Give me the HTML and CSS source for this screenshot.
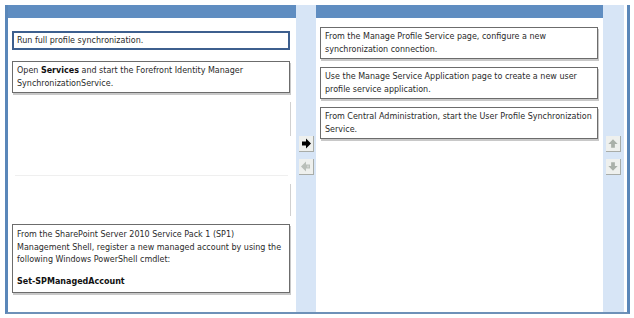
FILE: index.html
```html
<!DOCTYPE html>
<html>
<head>
<meta charset="utf-8">
<link rel="stylesheet" href="styles.css">
</head>
<body>
<div class="frame">
  <div class="panel left">
    <div class="head"></div>
    <div class="list left-list">
      <div class="item selected">Run full profile synchronization.</div>
      <div class="item gap11">Open <b>Services</b> and start the Forefront Identity Manager SynchronizationService.</div>
      <div class="slot slot-a"></div>
      <div class="faint-line"></div>
      <div class="slot slot-b"></div>
      <div class="item last">
        <p>From the SharePoint Server 2010 Service Pack 1 (SP1) Management Shell, register a new managed account by using the following Windows PowerShell cmdlet:</p>
        <p class="cmd"><b>Set-SPManagedAccount</b></p>
      </div>
    </div>
  </div>
  <div class="strip mid">
    <div class="btn">
      <svg width="14" height="15" viewBox="0 0 14 15"><path d="M3 5.5h4V2.5l5 5-5 5v-3H3z" fill="#000"/></svg>
    </div>
    <div class="btn">
      <svg width="14" height="15" viewBox="0 0 14 15"><path d="M11 5.5H7V2.5l-5 5 5 5v-3h4z" fill="#b9bfb9"/><path d="M9 6.5v2" stroke="#e6e6e6" stroke-width="1"/></svg>
    </div>
  </div>
  <div class="panel right">
    <div class="head"></div>
    <div class="list right-list">
      <div class="item">From the Manage Profile Service page, configure a new synchronization connection.</div>
      <div class="item">Use the Manage Service Application page to create a new user profile service application.</div>
      <div class="item">From Central Administration, start the User Profile Synchronization Service.</div>
    </div>
  </div>
  <div class="strip side">
    <div class="btn">
      <svg width="15" height="15" viewBox="0 0 15 15"><path d="M5.5 12V8H2.5l5-5 5 5h-3v4z" fill="#a9b0a9"/></svg>
    </div>
    <div class="btn">
      <svg width="15" height="15" viewBox="0 0 15 15"><path d="M5.5 3v4H2.5l5 5 5-5h-3V3z" fill="#a9b0a9"/></svg>
    </div>
  </div>
</div>
</body>
</html>
```
FILE: styles.css
```css
html, body {
  margin: 0;
  padding: 0;
  background: #fff;
}
body {
  padding: 5px 0 0 5px;
  font-family: "DejaVu Sans", Verdana, sans-serif;
  font-size: 8px;
  color: #2a2a2a;
}
.frame {
  display: flex;
  width: 619px;
  height: 307px;
  border-left: 3px solid #5a87b9;
  border-right: 3px solid #5a87b9;
  border-bottom: 2px solid #6e91b8;
  background: #fff;
}
.panel {
  display: flex;
  flex-direction: column;
}
.left { width: 288px; }
.right { width: 287px; }
.head {
  height: 13px;
  background: #5f8dc1;
  flex: none;
}
.strip {
  background: #d7e5f6;
  display: flex;
  flex-direction: column;
  align-items: center;
  gap: 7px;
  padding-top: 131px;
  box-sizing: border-box;
}
.mid { width: 20px; }
.side { width: 21px; }
.btn {
  width: 14px;
  height: 15px;
  background: #eef0ee;
  border-right: 1px solid #a8aca8;
  border-bottom: 1px solid #a8aca8;
  display: flex;
  align-items: center;
  justify-content: center;
}
.list {
  display: flex;
  flex-direction: column;
}
.left-list { padding: 13px 6px 0 4px; }
.right-list { padding: 9px 5px 0 4px; gap: 8px; }
.item {
  border: 1px solid #6c6c6c;
  background: #fff;
  box-shadow: 1px 2px 0 #c8c8c8;
  padding: 2px 4px;
  line-height: 13px;
}
.item.selected {
  border: 2px solid #3d5f8e;
  padding: 1px 3px;
  box-shadow: none;
}
.gap11 { margin-top: 11px; }
.slot {
  height: 34px;
  border-right: 1px solid #d0d0d0;
  margin-right: -1px;
}
.slot-a { margin-top: 9px; }
.faint-line {
  height: 1px;
  background: #efefef;
  margin: 39px 2px 0 3px;
}
.slot-b { margin-top: 8px; height: 32px; }
.item.last {
  margin-top: 8px;
  padding: 4px 4px 4px;
  line-height: 12.5px;
}
.item p { margin: 0; }
.item .cmd { margin-top: 9px; }
b { font-weight: bold; color: #111; }
```
